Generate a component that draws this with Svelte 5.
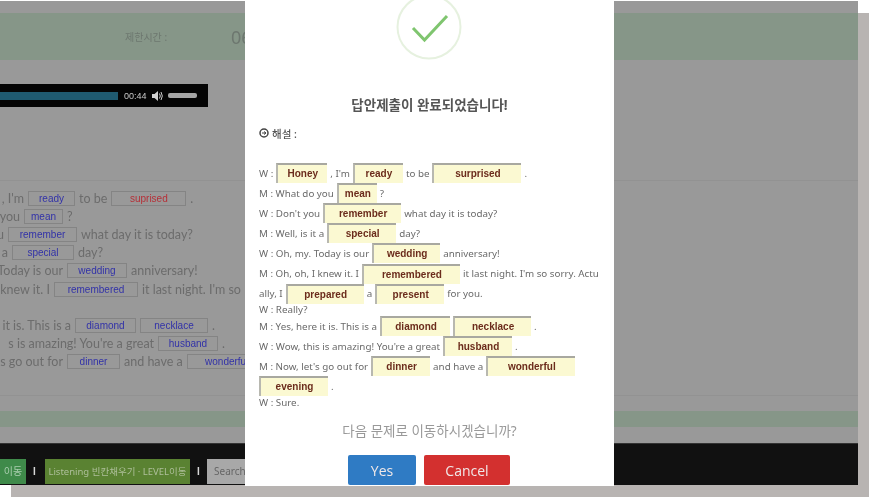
<script>
  const bgRows = [
    { lead: 24, text: ", I'm", parts: [["ready", 47], "to be", ["suprised", 75, "wrong"], "."] },
    { lead: 20, text: "you", parts: [["mean", 39], "?"] },
    { lead: 4, text: "u", parts: [["remember", 69], "what day it is today?"] },
    { lead: 8, text: "a", parts: [["special", 62], "day?"] },
    { lead: 63, text: "Today is our", parts: [["wedding", 60], "anniversary!"] },
    { lead: 50, text: "knew it. I", parts: [["remembered", 84], "it last night. I'm so"] },
    { lead: 0, text: "", parts: [] },
    { lead: 71, text: "it is. This is a", parts: [["diamond", 61], ["necklace", 68], "."] },
    { lead: 154, text: "s is amazing! You're a great", parts: [["husband", 60], "."] },
    { lead: 63, text: "s go out for", parts: [["dinner", 53], "and have a", ["wonderful", 80]] }
  ];

  const answers = [
    ["W :", ["Honey", 51], ", I'm", ["ready", 50], "to be", ["surprised", 89], "."],
    ["M : What do you", ["mean", 40], "?"],
    ["W : Don't you", ["remember", 78], "what day it is today?"],
    ["M : Well, is it a", ["special", 69], "day?"],
    ["W : Oh, my. Today is our", ["wedding", 68], "anniversary!"],
    ["M : Oh, oh, I knew it. I", ["remembered", 98], "it last night. I'm so sorry. Actu"],
    ["ally, I", ["prepared", 78], "a", ["present", 69], "for you."],
    ["W : Really?"],
    ["M : Yes, here it is. This is a", ["diamond", 70], ["necklace", 78], "."],
    ["W : Wow, this is amazing! You're a great", ["husband", 69], "."],
    ["M : Now, let's go out for", ["dinner", 59], "and have a", ["wonderful", 89]],
    [["evening", 69], "."],
    ["W : Sure."]
  ];
</script>

<div class="page">
  <div class="screen">
    <div class="timer">
      <span class="limit">제한시간 :</span>
      <span class="clock">06</span>
    </div>

    <div class="player">
      <div class="progress"></div>
      <span class="time">00:44</span>
      <svg class="speaker" width="11" height="10" viewBox="0 0 11 10">
        <path d="M0 3h2.5L6 0v10L2.5 7H0z" fill="#d0d0d0" />
        <path d="M7.5 2.5q1.6 2.5 0 5M9 1q2.6 4 0 8" fill="none" stroke="#d0d0d0" />
      </svg>
      <div class="volume"></div>
    </div>

    <div class="questions">
      {#each bgRows as row}
        <div class="q-row">
          <div class="lead" style="width:{row.lead}px">{row.text}</div>
          {#each row.parts as part}
            {#if typeof part === "string"}
              <span>{part}</span>
            {:else}
              <span class="blank" class:wrong={part[2]} style="width:{part[1]}px">{part[0]}</span>
            {/if}
          {/each}
        </div>
      {/each}
    </div>

    <div class="strip"></div>

    <div class="bottom">
      <div class="btn green">이동</div>
      <span class="sep">I</span>
      <div class="btn olive">Listening 빈칸채우기 · LEVEL이동</div>
      <span class="sep">I</span>
      <div class="btn search">Search</div>
    </div>
  </div>

  <div class="modal">
    <svg class="check" width="70" height="60" viewBox="0 0 70 60">
      <circle cx="34" cy="27" r="31.5" fill="none" stroke="#e6f1df" stroke-width="2" />
      <path d="M18 28l11.500 12L52 16" fill="none" stroke="#7fc56f" stroke-width="3" />
    </svg>

    <h2>답안제출이 완료되었습니다!</h2>

    <div class="note">
      <svg width="10" height="10" viewBox="0 0 10 10">
        <circle cx="5" cy="5" r="4" fill="none" stroke="#444" stroke-width="1.500" />
        <path d="M3 5h4M5 3.500L7 5 5 6.500" fill="none" stroke="#444" />
      </svg>
      해설 :
    </div>

    <div class="answers">
      {#each answers as row}
        <div class="a-row" class:plain={row.length === 1}>
          {#each row as part}
            {#if typeof part === "string"}
              <span>{part}</span>
            {:else}
              <span class="fill" style="width:{part[1]}px">{part[0]}</span>
            {/if}
          {/each}
        </div>
      {/each}
    </div>

    <p class="ask">다음 문제로 이동하시겠습니까?</p>

    <div class="actions">
      <button class="yes">Yes</button>
      <button class="cancel">Cancel</button>
    </div>
  </div>
</div>

<style>
  :global(body) {
    background: #fff;
  }

  .page {
    position: relative;
    width: 869px;
    height: 498px;
    overflow: hidden;
    padding-top: 1px;
    box-sizing: border-box;
    font-family: "Noto Sans", "Noto Sans CJK KR", sans-serif;
    filter: blur(0.4px);
  }

  .screen {
    width: 858px;
    height: 484px;
    background: #999;
    box-shadow: 11px 12px 0 #b8b4b2;
    display: flex;
    flex-direction: column;
    padding-top: 12px;
    box-sizing: border-box;
  }

  .timer {
    height: 47px;
    flex: none;
    background: #869688;
    display: flex;
    align-items: center;
    color: #6d776f;
  }

  .limit {
    margin-left: 125px;
    font-size: 10px;
    width: 106px;
  }

  .clock {
    font-size: 18px;
  }

  .player {
    width: 208px;
    height: 23px;
    margin-top: 24px;
    flex: none;
    background: #050505;
    display: flex;
    align-items: center;
    color: #c8c8c8;
  }

  .progress {
    width: 118px;
    height: 8px;
    background: #1f5a70;
  }

  .time {
    font-family: "Liberation Sans", sans-serif;
    font-size: 9px;
    margin-left: 6px;
    width: 28px;
  }

  .volume {
    width: 29px;
    height: 5px;
    margin-left: 5px;
    border-radius: 2px;
    background: #a5a5a5;
  }

  .questions {
    margin-top: 73px;
    height: 216px;
    flex: none;
    padding-top: 8px;
    box-sizing: border-box;
    border-top: 1px solid #929292;
    border-bottom: 1px solid #929292;
    color: #6c6c6c;
    font-family: Lato, "Noto Sans CJK KR", sans-serif;
    font-size: 12.500px;
    overflow: hidden;
  }

  .q-row {
    display: flex;
    align-items: center;
    gap: 4px;
    height: 18.200px;
    white-space: nowrap;
    width: 245px;
  }

  .lead {
    flex: none;
    display: flex;
    justify-content: flex-end;
    overflow: hidden;
  }

  .blank {
    flex: none;
    height: 15px;
    box-sizing: border-box;
    border: 1px solid #848484;
    font-family: "Liberation Sans", sans-serif;
    font-size: 10px;
    line-height: 13px;
    text-align: center;
    color: #3232a8;
  }

  .blank.wrong {
    color: #b53038;
  }

  .strip {
    height: 16px;
    margin-top: 15px;
    flex: none;
    background: #869688;
  }

  .bottom {
    margin-top: 16px;
    flex: 1;
    background: #111;
    border-top: 1px solid #333;
    display: flex;
    align-items: flex-end;
    gap: 7px;
    padding-bottom: 1px;
    color: #d8d8d8;
    font-size: 10px;
    overflow: hidden;
  }

  .btn {
    height: 25px;
    line-height: 25px;
    text-align: center;
    flex: none;
    box-sizing: border-box;
  }

  .sep {
    font-family: "Liberation Sans", sans-serif;
    line-height: 25px;
    width: 5px;
    font-weight: 700;
  }

  .green {
    width: 26px;
    background: #3f8a4a;
    color: #a9cdaf;
  }

  .olive {
    width: 145px;
    background: #5a8232;
    color: #aebf9a;
    font-size: 9.500px;
  }

  .search {
    width: 50px;
    background: #a8a8a8;
    color: #666;
    margin-left: -2px;
    text-align: left;
    padding-left: 7px;
  }

  .modal {
    position: absolute;
    left: 245px;
    top: 0;
    width: 369px;
    height: 486px;
    background: #fff;
    padding: 0 14px;
    box-sizing: border-box;
    display: flex;
    flex-direction: column;
    color: #666;
    overflow: hidden;
  }

  .check {
    align-self: center;
    flex: none;
  }

  h2 {
    margin: 36px 0 0;
    height: 18px;
    line-height: 18px;
    text-align: center;
    font-size: 13.500px;
    font-weight: 700;
    color: #555;
  }

  .note {
    margin-top: 12px;
    display: flex;
    align-items: center;
    gap: 3px;
    font-size: 10.500px;
    height: 14px;
    font-weight: 500;
    color: #555;
  }

  .answers {
    margin-top: 23px;
    font-size: 9.800px;
    color: #6a6a6a;
  }

  .a-row {
    display: flex;
    align-items: center;
    gap: 3px;
    height: 20.100px;
    white-space: nowrap;
  }

  .a-row.plain {
    height: 12.500px;
  }

  .fill {
    flex: none;
    height: 20px;
    box-sizing: border-box;
    border-top: 2px solid #a8a8a0;
    border-left: 2px solid #b8b8b0;
    background: #fbf9d2;
    font-family: "Liberation Sans", sans-serif;
    font-size: 10px;
    font-weight: 700;
    line-height: 17px;
    text-align: center;
    color: #6b2c1c;
  }

  .ask {
    margin: 12px 0 0;
    height: 20px;
    line-height: 20px;
    text-align: center;
    font-size: 13.500px;
    color: #999;
  }

  .actions {
    margin-top: 14px;
    margin-left: 89px;
    display: flex;
    gap: 8px;
  }

  button {
    height: 30px;
    border: 0;
    border-radius: 2px;
    color: #f0e8e8;
    font-family: "Open Sans", sans-serif;
    font-size: 14px;
    padding: 0;
  }

  .yes {
    width: 68px;
    background: #2f7bc4;
  }

  .cancel {
    width: 86px;
    background: #d3302f;
  }
</style>
